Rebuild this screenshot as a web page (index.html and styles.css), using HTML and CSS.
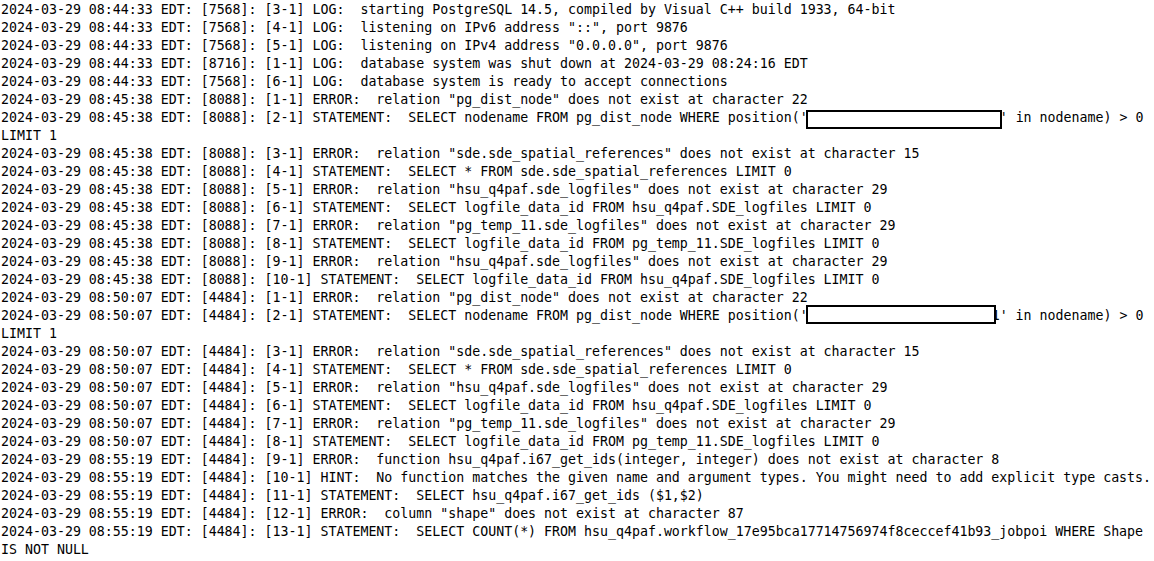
FILE: index.html
```html
<!DOCTYPE html>
<html>
<head>
<meta charset="utf-8">
<link rel="stylesheet" href="styles.css">
</head>
<body>
<pre class="log">2024-03-29 08:44:33 EDT: [7568]: [3-1] LOG:  starting PostgreSQL 14.5, compiled by Visual C++ build 1933, 64-bit
2024-03-29 08:44:33 EDT: [7568]: [4-1] LOG:  listening on IPv6 address "::", port 9876
2024-03-29 08:44:33 EDT: [7568]: [5-1] LOG:  listening on IPv4 address "0.0.0.0", port 9876
2024-03-29 08:44:33 EDT: [8716]: [1-1] LOG:  database system was shut down at 2024-03-29 08:24:16 EDT
2024-03-29 08:44:33 EDT: [7568]: [6-1] LOG:  database system is ready to accept connections
2024-03-29 08:45:38 EDT: [8088]: [1-1] ERROR:  relation "pg_dist_node" does not exist at character 22
2024-03-29 08:45:38 EDT: [8088]: [2-1] STATEMENT:  SELECT nodename FROM pg_dist_node WHERE position('<span class="redact redact-a"></span>' in nodename) &gt; 0
LIMIT 1
2024-03-29 08:45:38 EDT: [8088]: [3-1] ERROR:  relation "sde.sde_spatial_references" does not exist at character 15
2024-03-29 08:45:38 EDT: [8088]: [4-1] STATEMENT:  SELECT * FROM sde.sde_spatial_references LIMIT 0
2024-03-29 08:45:38 EDT: [8088]: [5-1] ERROR:  relation "hsu_q4paf.sde_logfiles" does not exist at character 29
2024-03-29 08:45:38 EDT: [8088]: [6-1] STATEMENT:  SELECT logfile_data_id FROM hsu_q4paf.SDE_logfiles LIMIT 0
2024-03-29 08:45:38 EDT: [8088]: [7-1] ERROR:  relation "pg_temp_11.sde_logfiles" does not exist at character 29
2024-03-29 08:45:38 EDT: [8088]: [8-1] STATEMENT:  SELECT logfile_data_id FROM pg_temp_11.SDE_logfiles LIMIT 0
2024-03-29 08:45:38 EDT: [8088]: [9-1] ERROR:  relation "hsu_q4paf.sde_logfiles" does not exist at character 29
2024-03-29 08:45:38 EDT: [8088]: [10-1] STATEMENT:  SELECT logfile_data_id FROM hsu_q4paf.SDE_logfiles LIMIT 0
2024-03-29 08:50:07 EDT: [4484]: [1-1] ERROR:  relation "pg_dist_node" does not exist at character 22
2024-03-29 08:50:07 EDT: [4484]: [2-1] STATEMENT:  SELECT nodename FROM pg_dist_node WHERE position('<span class="redact redact-b"></span>1' in nodename) &gt; 0
LIMIT 1
2024-03-29 08:50:07 EDT: [4484]: [3-1] ERROR:  relation "sde.sde_spatial_references" does not exist at character 15
2024-03-29 08:50:07 EDT: [4484]: [4-1] STATEMENT:  SELECT * FROM sde.sde_spatial_references LIMIT 0
2024-03-29 08:50:07 EDT: [4484]: [5-1] ERROR:  relation "hsu_q4paf.sde_logfiles" does not exist at character 29
2024-03-29 08:50:07 EDT: [4484]: [6-1] STATEMENT:  SELECT logfile_data_id FROM hsu_q4paf.SDE_logfiles LIMIT 0
2024-03-29 08:50:07 EDT: [4484]: [7-1] ERROR:  relation "pg_temp_11.sde_logfiles" does not exist at character 29
2024-03-29 08:50:07 EDT: [4484]: [8-1] STATEMENT:  SELECT logfile_data_id FROM pg_temp_11.SDE_logfiles LIMIT 0
2024-03-29 08:55:19 EDT: [4484]: [9-1] ERROR:  function hsu_q4paf.i67_get_ids(integer, integer) does not exist at character 8
2024-03-29 08:55:19 EDT: [4484]: [10-1] HINT:  No function matches the given name and argument types. You might need to add explicit type casts.
2024-03-29 08:55:19 EDT: [4484]: [11-1] STATEMENT:  SELECT hsu_q4paf.i67_get_ids ($1,$2)
2024-03-29 08:55:19 EDT: [4484]: [12-1] ERROR:  column "shape" does not exist at character 87
2024-03-29 08:55:19 EDT: [4484]: [13-1] STATEMENT:  SELECT COUNT(*) FROM hsu_q4paf.workflow_17e95bca17714756974f8ceccef41b93_jobpoi WHERE Shape
IS NOT NULL</pre>
</body>
</html>
```
FILE: styles.css
```css
html, body {
  margin: 0;
  padding: 0;
  background: #ffffff;
}

.log {
  margin: 0;
  padding: 1px 0 0 1px;
  font-family: "DejaVu Sans Mono", "Liberation Mono", monospace;
  font-size: 13.288px;
  line-height: 18px;
  color: #000000;
  white-space: pre;
}

.redact {
  display: inline-block;
  position: relative;
  height: 18px;
  vertical-align: top;
}

.redact::before {
  content: "";
  position: absolute;
  left: -2px;
  background: #ffffff;
  border: 2px solid #000000;
  box-sizing: border-box;
  height: 19px;
}

.redact-a {
  width: 192px;
}

.redact-a::before {
  top: 1px;
  width: 196px;
}

.redact-b {
  width: 184px;
}

.redact-b::before {
  top: -2px;
  width: 190px;
  z-index: 1;
}
```
